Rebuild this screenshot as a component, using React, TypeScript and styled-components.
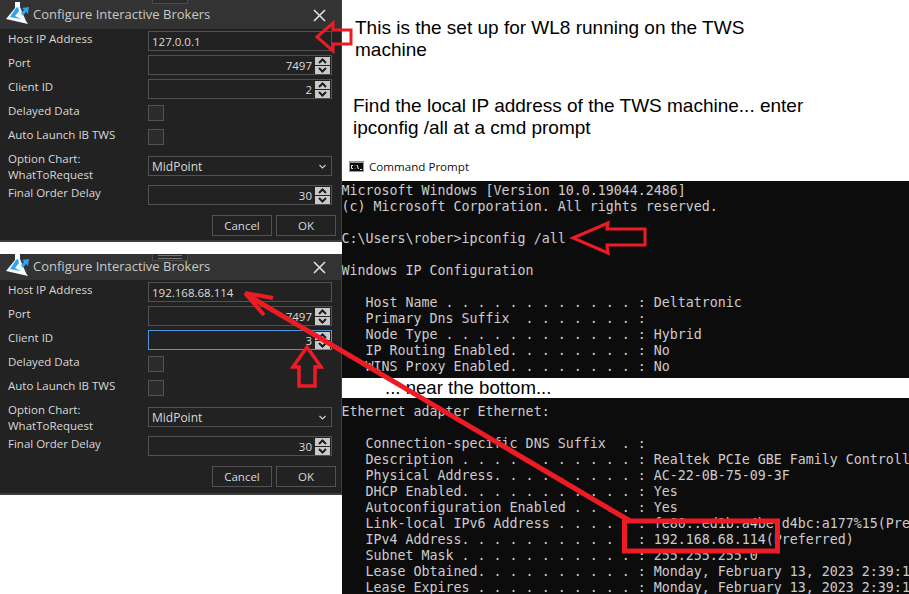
import React from "react";
import styled, { createGlobalStyle } from "styled-components";

const Global = createGlobalStyle`
  html, body { margin: 0; padding: 0; background: #fff; }
  * { box-sizing: border-box; }
`;

const Page = styled.div`
  position: relative;
  width: 909px;
  height: 594px;
  overflow: hidden;
  display: grid;
  grid-template-columns: 342px 567px;
  background: #fff;
`;

const LeftColumn = styled.div`
  display: flex;
  flex-direction: column;
  gap: 12px;
`;

const RightColumn = styled.div`
  display: flex;
  flex-direction: column;
  font-family: "Liberation Sans", Arial, sans-serif;
`;

const Dialog = styled.section<{ $h: number }>`
  position: relative;
  height: ${(p) => p.$h}px;
  background: #222222;
  border-right: 1px solid #3d3d3d;
  border-bottom: 2px solid #3d3d3d;
  font-family: "Open Sans", "Noto Sans", sans-serif;
  color: #d8d8d8;
  font-size: 11.5px;
`;

const TitleBar = styled.header<{ $h: number; $pad: number }>`
  height: ${(p) => p.$h}px;
  background: #333333;
  display: flex;
  align-items: flex-end;
  padding: 0 0 ${(p) => p.$pad}px 5px;
  font-size: 13px;
  color: #c8c8c8;
`;

const TitleText = styled.span`
  margin-left: 4px;
  padding-bottom: 1px;
  line-height: 22px;
  flex: 1;
`;

const CloseButton = styled.span`
  width: 16px;
  height: 22px;
  margin-right: 14px;
  display: flex;
  align-items: center;
  justify-content: center;
`;

const Handle = styled.div<{ $h: number }>`
  position: absolute;
  left: 152px;
  top: 0;
  width: 36px;
  height: ${(p) => p.$h}px;
  background: #2b2b2b;
  border: 1px solid #4a4a4a;
  border-top: 0;
  display: flex;
  flex-direction: column;
  justify-content: flex-end;
  align-items: center;
  gap: 2px;
  padding-bottom: 1px;
  & > i { display: block; width: 24px; height: 1px; background: #777; }
`;

const Form = styled.div`
  display: flex;
  flex-direction: column;
  padding-top: 2px;
`;

const Row = styled.div<{ $h?: number }>`
  height: ${(p) => p.$h ?? 24}px;
  display: grid;
  grid-template-columns: 148px 184px;
`;

const Label = styled.div`
  padding: 0 0 0 8px;
  line-height: 16px;
  white-space: nowrap;
`;

const Field = styled.div<{ $focus?: boolean }>`
  height: 20px;
  border: 1px solid ${(p) => (p.$focus ? "#4f94d8" : "#525252")};
  display: flex;
  align-items: center;
  padding: 0 1px 0 3px;
  color: #dcdcdc;
`;

const FieldValue = styled.span<{ $right?: boolean }>`
  flex: 1;
  text-align: ${(p) => (p.$right ? "right" : "left")};
  padding-right: ${(p) => (p.$right ? "3px" : "0")};
  padding-top: 1px;
`;

const Spinner = styled.span`
  width: 15px;
  height: 17px;
  display: flex;
  flex-direction: column;
  gap: 1px;
  & > span {
    flex: 1;
    background: #c9c9c9;
    display: flex;
    align-items: center;
    justify-content: center;
  }
`;

const CheckBox = styled.div`
  width: 16px;
  height: 16px;
  margin-top: 2px;
  border: 1px solid #525252;
  background: #2b2b2b;
`;

const Select = styled.div`
  height: 20px;
  margin-top: 5px;
  border: 1px solid #525252;
  display: flex;
  align-items: center;
  justify-content: space-between;
  padding: 0 5px 0 3px;
  font-size: 12px;
`;

const Footer = styled.div`
  display: flex;
  justify-content: flex-end;
  gap: 4px;
  padding: 6px 5px 0 0;
`;

const Button = styled.button`
  width: 60px;
  height: 21px;
  border: 1px solid #525252;
  background: #222222;
  color: #d8d8d8;
  font: inherit;
  padding: 0;
`;

const Notes = styled.div`
  height: 152px;
  padding: 17px 0 0 13px;
  font-size: 19px;
  line-height: 22px;
  color: #000;
`;

const Note = styled.p<{ $shift?: number }>`
  margin: 0 0 34px ${(p) => p.$shift ?? 0}px;
  width: 460px;
`;

const CmdBar = styled.div`
  height: 29px;
  display: flex;
  align-items: center;
  gap: 5px;
  padding-left: 7px;
  font-family: "Open Sans", "Noto Sans", sans-serif;
  font-size: 11.6px;
  color: #111;
`;

const Terminal = styled.pre<{ $h: number; $top: number }>`
  margin: 0;
  height: ${(p) => p.$h}px;
  padding-top: ${(p) => p.$top}px;
  overflow: hidden;
  background: #0c0c0c;
  color: #cccccc;
  font-family: "DejaVu Sans Mono", "Liberation Mono", monospace;
  font-size: 13.3px;
  line-height: 16px;
  & > code {
    display: block;
    font: inherit;
    margin-left: -0.5px;
  }
`;

const Strip = styled.div`
  height: 20px;
  padding-left: 43px;
  font-size: 18.6px;
  line-height: 20px;
  color: #000;
`;

const Marks = styled.svg`
  position: absolute;
  inset: 0;
  pointer-events: none;
`;

const Logo = () => (
  <svg width="24" height="24" viewBox="0 0 24 24">
    <path d="M10 0 L15 0 L15 5 L21 19 L23 22 L1 17 L10 6 Z" fill="#f2fbff" />
    <path d="M11 6 L13 5 L14 9 L10 14 L16 17 L5 15 Z" fill="#2fa4ea" />
    <path d="M16 11 L19 8 L17 6 L24 5 L23 12 L21 10 L18 14 Z" fill="#2fa4ea" />
  </svg>
);

const Close = () => (
  <svg width="13" height="13" viewBox="0 0 13 13">
    <path d="M1 1 L12 12 M12 1 L1 12" stroke="#dcdcdc" strokeWidth="1.7" />
  </svg>
);

const Chevron = ({ up }: { up?: boolean }) => (
  <svg width="9" height="6" viewBox="0 0 9 6">
    <path d={up ? "M1 5 L4.5 1.5 L8 5" : "M1 1 L4.5 4.5 L8 1"} stroke="#1c1c1c" strokeWidth="2" fill="none" />
  </svg>
);

const SelectChevron = () => (
  <svg width="7" height="5" viewBox="0 0 7 5">
    <path d="M0.5 1 L3.5 4 L6.5 1" stroke="#cfcfcf" strokeWidth="1.1" fill="none" />
  </svg>
);

const CmdIcon = () => (
  <svg width="15" height="11" viewBox="0 0 15 11">
    <rect width="15" height="11" fill="#9a9a9a" />
    <rect x="1" y="2" width="13" height="8" fill="#0c0c0c" />
    <path d="M4 4.5H2.5V7.5H4M6 4.5V5M6 7V7.5M8 4L9.5 8M11 8.5H13" stroke="#f2f2f2" strokeWidth="1" fill="none" />
  </svg>
);

const NumberField = ({ value, focus }: { value: string; focus?: boolean }) => (
  <Field $focus={focus}>
    <FieldValue $right>{value}</FieldValue>
    <Spinner>
      <span><Chevron up /></span>
      <span><Chevron /></span>
    </Spinner>
  </Field>
);

const ConfigDialog = ({
  height, titleH, titlePad, handleH, ip, clientId, focus,
}: {
  height: number; titleH: number; titlePad: number; handleH: number; ip: string; clientId: string; focus?: boolean;
}) => (
  <Dialog $h={height}>
    <TitleBar $h={titleH} $pad={titlePad}>
      <Logo />
      <TitleText>Configure Interactive Brokers</TitleText>
      <CloseButton><Close /></CloseButton>
    </TitleBar>
    <Handle $h={handleH}><i /><i /></Handle>
    <Form>
      <Row><Label>Host IP Address</Label><Field><FieldValue>{ip}</FieldValue></Field></Row>
      <Row><Label>Port</Label><NumberField value="7497" /></Row>
      <Row><Label>Client ID</Label><NumberField value={clientId} focus={focus} /></Row>
      <Row><Label>Delayed Data</Label><CheckBox /></Row>
      <Row><Label>Auto Launch IB TWS</Label><CheckBox /></Row>
      <Row $h={34}>
        <Label>Option Chart:<br />WhatToRequest</Label>
        <Select>MidPoint<SelectChevron /></Select>
      </Row>
      <Row><Label>Final Order Delay</Label><NumberField value="30" /></Row>
    </Form>
    <Footer>
      <Button>Cancel</Button>
      <Button>OK</Button>
    </Footer>
  </Dialog>
);

const top = `Microsoft Windows [Version 10.0.19044.2486]
(c) Microsoft Corporation. All rights reserved.

C:\\Users\\rober>ipconfig /all

Windows IP Configuration

   Host Name . . . . . . . . . . . . : Deltatronic
   Primary Dns Suffix  . . . . . . . :
   Node Type . . . . . . . . . . . . : Hybrid
   IP Routing Enabled. . . . . . . . : No
   WINS Proxy Enabled. . . . . . . . : No`;

const bottom = `Ethernet adapter Ethernet:

   Connection-specific DNS Suffix  . :
   Description . . . . . . . . . . . : Realtek PCIe GBE Family Controller
   Physical Address. . . . . . . . . : AC-22-0B-75-09-3F
   DHCP Enabled. . . . . . . . . . . : Yes
   Autoconfiguration Enabled . . . . : Yes
   Link-local IPv6 Address . . . . . : fe80::ed1b:a4be:d4bc:a177%15(Preferred)
   IPv4 Address. . . . . . . . . . . : 192.168.68.114(Preferred)
   Subnet Mask . . . . . . . . . . . : 255.255.255.0
   Lease Obtained. . . . . . . . . . : Monday, February 13, 2023 2:39:16 PM
   Lease Expires . . . . . . . . . . : Monday, February 13, 2023 2:39:16 PM`;

export default function App() {
  return (
    <Page>
      <Global />
      <LeftColumn>
        <ConfigDialog height={242} titleH={29} titlePad={3} handleH={4} ip="127.0.0.1" clientId="2" />
        <ConfigDialog height={241} titleH={26} titlePad={2} handleH={7} ip="192.168.68.114" clientId="3" focus />
      </LeftColumn>
      <RightColumn>
        <Notes>
          <Note>This is the set up for WL8 running on the TWS machine</Note>
          <Note $shift={-2}>Find the local IP address of the TWS machine... enter ipconfig /all at a cmd prompt</Note>
        </Notes>
        <CmdBar><CmdIcon />Command Prompt</CmdBar>
        <Terminal $h={197} $top={2}><code>{top}</code></Terminal>
        <Strip>... near the bottom...</Strip>
        <Terminal $h={196} $top={6}><code>{bottom}</code></Terminal>
      </RightColumn>
      <Marks width="909" height="594" viewBox="0 0 909 594">
        <g fill="none" stroke="#ed1c24" strokeWidth="3" strokeLinejoin="miter">
          <path d="M317 37 L333 23 L333 30 L351 30 L351 44 L333 44 L333 51 Z" />
          <path d="M573 238 L608 223 L607 229 L645 229 L645 245 L607 245 L608 253 Z" />
          <path d="M307 347 L293 367 L299 367 L299 386 L315 386 L315 367 L321 367 Z" strokeWidth="3.5" />
          <rect x="624.5" y="521" width="153" height="30" strokeWidth="5" />
          <path d="M247 295 L630 521" strokeWidth="5" />
          <path d="M245 293 L273 298 M245 293 L264 315" strokeWidth="4" />
        </g>
      </Marks>
    </Page>
  );
}
